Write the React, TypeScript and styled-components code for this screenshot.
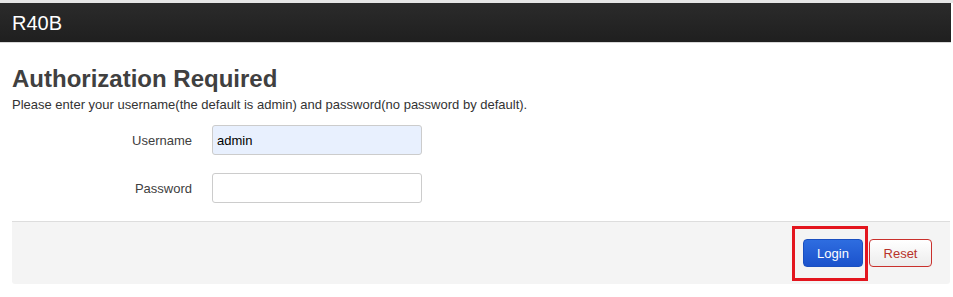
import React from "react";
import styled, { createGlobalStyle } from "styled-components";

const Global = createGlobalStyle`
  html, body { margin: 0; padding: 0; background: #fff; }
  body {
    font-family: "Liberation Sans", Arial, sans-serif;
    color: #404040;
    border-top: 3px solid #e6e6e6;
  }
  *, *::before, *::after { box-sizing: border-box; }
`;

const Header = styled.header`
  width: calc(100% - 2px);
  height: 40px;
  background: linear-gradient(#2b2b2b, #1f1f1f);
  border-bottom: 1px solid #d8d8d8;
  display: flex;
  align-items: center;
  padding-left: 12px;
`;

const Brand = styled.span`
  color: #fff;
  font-size: 20px;
  line-height: 1;
`;

const Main = styled.main`
  padding: 22px 3px 0 12px;
`;

const Title = styled.h2`
  margin: 0;
  font-size: 24px;
  line-height: 28px;
  font-weight: bold;
  color: #404040;
`;

const Desc = styled.p`
  margin: 4px 0 0;
  font-size: 13px;
  line-height: 16px;
  color: #333;
`;

const Form = styled.div`
  display: grid;
  grid-template-columns: 180px 210px;
  column-gap: 20px;
  row-gap: 18px;
  margin-top: 12px;
  align-items: center;
`;

const Label = styled.label`
  text-align: right;
  font-size: 13px;
  color: #404040;
`;

const Input = styled.input<{ $filled?: boolean }>`
  height: 30px;
  width: 210px;
  border: 1px solid #ccc;
  border-radius: 3px;
  padding: 0 4px;
  font-family: "Liberation Sans", Arial, sans-serif;
  font-size: 13px;
  color: #000;
  background: ${(p) => (p.$filled ? "#e8f0fe" : "#fff")};
  outline: none;
`;

const Footer = styled.div`
  margin-top: 18px;
  border-top: 1px solid #ddd;
  background: #f4f4f4;
  height: 63px;
  display: flex;
  justify-content: flex-end;
  align-items: center;
  gap: 6px;
  padding-right: 18px;
  border-radius: 0 0 3px 3px;
`;

const Button = styled.button<{ $variant: "primary" | "reset" }>`
  height: 28px;
  padding: 0;
  font-family: "Liberation Sans", Arial, sans-serif;
  font-size: 13px;
  border-radius: 4px;
  cursor: pointer;
  ${(p) =>
    p.$variant === "primary"
      ? `
    color: #fff;
    background: linear-gradient(#2e6de0, #1b52cc);
    border: 1px solid #1a4fc0;
    width: 60px;
  `
      : `
    color: #b8322a;
    background: linear-gradient(#fff, #ececec);
    border: 1px solid #c9302c;
    width: 63px;
  `}
`;

const Highlight = styled.span`
  position: relative;
  display: inline-flex;
  &::after {
    content: "";
    position: absolute;
    left: -11px;
    top: -13px;
    width: 76px;
    height: 55px;
    border: 3px solid #e3151e;
    pointer-events: none;
  }
`;

export default function App() {
  return (
    <>
      <Global />
      <Header>
        <Brand>R40B</Brand>
      </Header>
      <Main>
        <Title>Authorization Required</Title>
        <Desc>
          Please enter your username(the default is admin) and password(no password by default).
        </Desc>
        <Form>
          <Label>Username</Label>
          <Input $filled defaultValue="admin" />
          <Label>Password</Label>
          <Input type="password" />
        </Form>
        <Footer>
          <Highlight>
            <Button $variant="primary">Login</Button>
          </Highlight>
          <Button $variant="reset">Reset</Button>
        </Footer>
      </Main>
    </>
  );
}
